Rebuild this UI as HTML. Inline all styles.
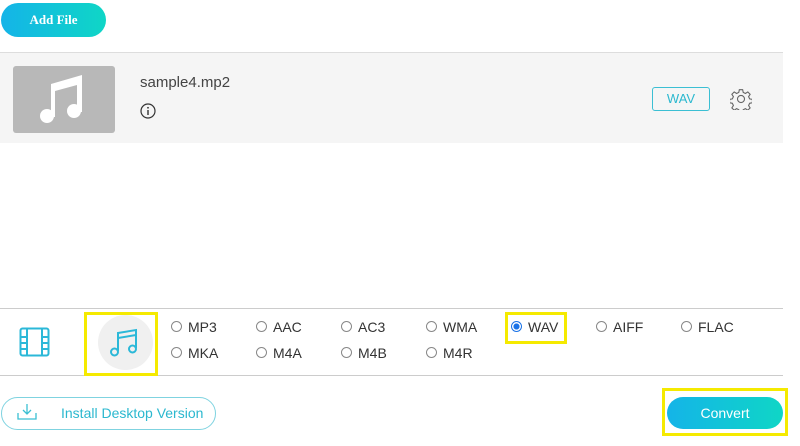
<!DOCTYPE html>
<html><head><style>
body{margin:0;width:800px;height:446px;background:#fff;font-family:"Liberation Sans",sans-serif;position:relative;overflow:hidden}
.a{position:absolute}
.r{position:absolute;font-size:14px;color:#333}
.r i{position:absolute;left:-17px;top:2px;width:11px;height:11px;border:1px solid #888;border-radius:50%;box-sizing:border-box}
</style></head><body>
<div class="a" style="left:1px;top:3px;width:105px;height:34px;border-radius:17px;background:linear-gradient(90deg,#14b4e8,#0fd6c6);color:#fff;font-family:'Liberation Serif',serif;font-weight:bold;font-size:13px;line-height:34px;text-align:center">Add File</div>
<div class="a" style="left:0;top:52px;width:783px;height:1px;background:#ddd"></div>
<div class="a" style="left:0;top:53px;width:783px;height:90px;background:#f5f5f5"></div>
<div class="a" style="left:13px;top:66px;width:102px;height:67px;background:#b8b8b8;border-radius:3px"></div>
<svg class="a" style="left:38px;top:72px" width="48" height="56" viewBox="0 0 48 56"><path d="M13 12 L44 3 L44 40 L39 40 L39 13 L17 19 L17 45 L13 45 Z" fill="#fff"/><circle cx="9" cy="44" r="7" fill="#fff"/><circle cx="36" cy="39" r="7" fill="#fff"/></svg>
<div class="a" style="left:140px;top:74px;font-size:15px;color:#444">sample4.mp2</div>
<svg class="a" style="left:140px;top:103px" width="16" height="16"><circle cx="8" cy="8" r="7" fill="none" stroke="#333" stroke-width="1.2"/><rect x="7.3" y="7" width="1.4" height="5" fill="#333"/><circle cx="8" cy="4.8" r="0.9" fill="#333"/></svg>
<div class="a" style="left:652px;top:87px;width:58px;height:24px;border:1px solid #3bbfd3;border-radius:3px;box-sizing:border-box;color:#2bb8cf;font-size:13px;line-height:22px;text-align:center">WAV</div>
<svg class="a" style="left:730px;top:88px" width="22" height="22" viewBox="0 0 20 20"><path d="M8.5 1.5h3l.5 2.5 2 1 2.2-1.4 2.1 2.1-1.4 2.2 1 2 2.5.5v3l-2.5.5-1 2 1.4 2.2-2.1 2.1-2.2-1.4-2 1-.5 2.5h-3l-.5-2.5-2-1-2.2 1.4-2.1-2.1 1.4-2.2-1-2-2.5-.5v-3l2.5-.5 1-2-1.4-2.2 2.1-2.1 2.2 1.4 2-1z" fill="none" stroke="#666" stroke-width="1"/><circle cx="10" cy="10" r="3.2" fill="none" stroke="#666"/></svg>
<div class="a" style="left:0;top:308px;width:783px;height:1px;background:#ccc"></div>
<div class="a" style="left:0;top:375px;width:783px;height:1px;background:#ccc"></div>
<svg class="a" style="left:19px;top:327px" width="31" height="30" viewBox="0 0 31 30"><rect x="1.5" y="1.5" width="28" height="27" rx="2" fill="none" stroke="#2bb8d8" stroke-width="2"/><path d="M8 2v26M23 2v26M2 10h6M2 16h6M2 22h6M23 10h6M23 16h6M23 22h6" stroke="#2bb8d8" stroke-width="2"/></svg>
<div class="a" style="left:98px;top:315px;width:55px;height:55px;border-radius:50%;background:#f0f0f0"></div>
<svg class="a" style="left:109px;top:327px" width="32" height="30" viewBox="0 0 32 30"><path d="M9 24V6l18-3v18M9 11l18-3" fill="none" stroke="#2bb8d8" stroke-width="2"/><circle cx="5.5" cy="25" r="3.5" fill="none" stroke="#2bb8d8" stroke-width="2"/><circle cx="23.5" cy="22" r="3.5" fill="none" stroke="#2bb8d8" stroke-width="2"/></svg>
<div class="a" style="left:84px;top:312px;width:74px;height:64px;border:3px solid #f5ea00;box-sizing:border-box"></div>
<div class="r" style="left:188px;top:319px"><i></i>MP3</div>
<div class="r" style="left:273px;top:319px"><i></i>AAC</div>
<div class="r" style="left:358px;top:319px"><i></i>AC3</div>
<div class="r" style="left:443px;top:319px"><i></i>WMA</div>
<div class="r" style="left:528px;top:319px"><i style="border-color:#1a73e8;background:radial-gradient(#1a73e8 45%,#fff 50%)"></i>WAV</div>
<div class="r" style="left:613px;top:319px"><i></i>AIFF</div>
<div class="r" style="left:698px;top:319px"><i></i>FLAC</div>
<div class="r" style="left:188px;top:345px"><i></i>MKA</div>
<div class="r" style="left:273px;top:345px"><i></i>M4A</div>
<div class="r" style="left:358px;top:345px"><i></i>M4B</div>
<div class="r" style="left:443px;top:345px"><i></i>M4R</div>
<div class="a" style="left:505px;top:312px;width:62px;height:32px;border:3px solid #f5ea00;box-sizing:border-box"></div>
<div class="a" style="left:1px;top:397px;width:215px;height:33px;border:1px solid #7fd3e0;border-radius:17px;box-sizing:border-box"></div>
<svg class="a" style="left:16px;top:403px" width="22" height="18" viewBox="0 0 22 18"><path d="M11 1v10M7 7l4 4 4-4M2 10v6h18v-6" fill="none" stroke="#3bbfd3" stroke-width="1.3"/></svg>
<div class="a" style="left:61px;top:405px;font-size:14px;color:#2bb8cf">Install Desktop Version</div>
<div class="a" style="left:667px;top:397px;width:116px;height:32px;border-radius:16px;background:linear-gradient(90deg,#14b4e8,#0fd6c6);color:#fff;font-size:14px;line-height:32px;text-align:center">Convert</div>
<div class="a" style="left:662px;top:388px;width:126px;height:48px;border:3px solid #f5ea00;box-sizing:border-box"></div>
</body></html>
